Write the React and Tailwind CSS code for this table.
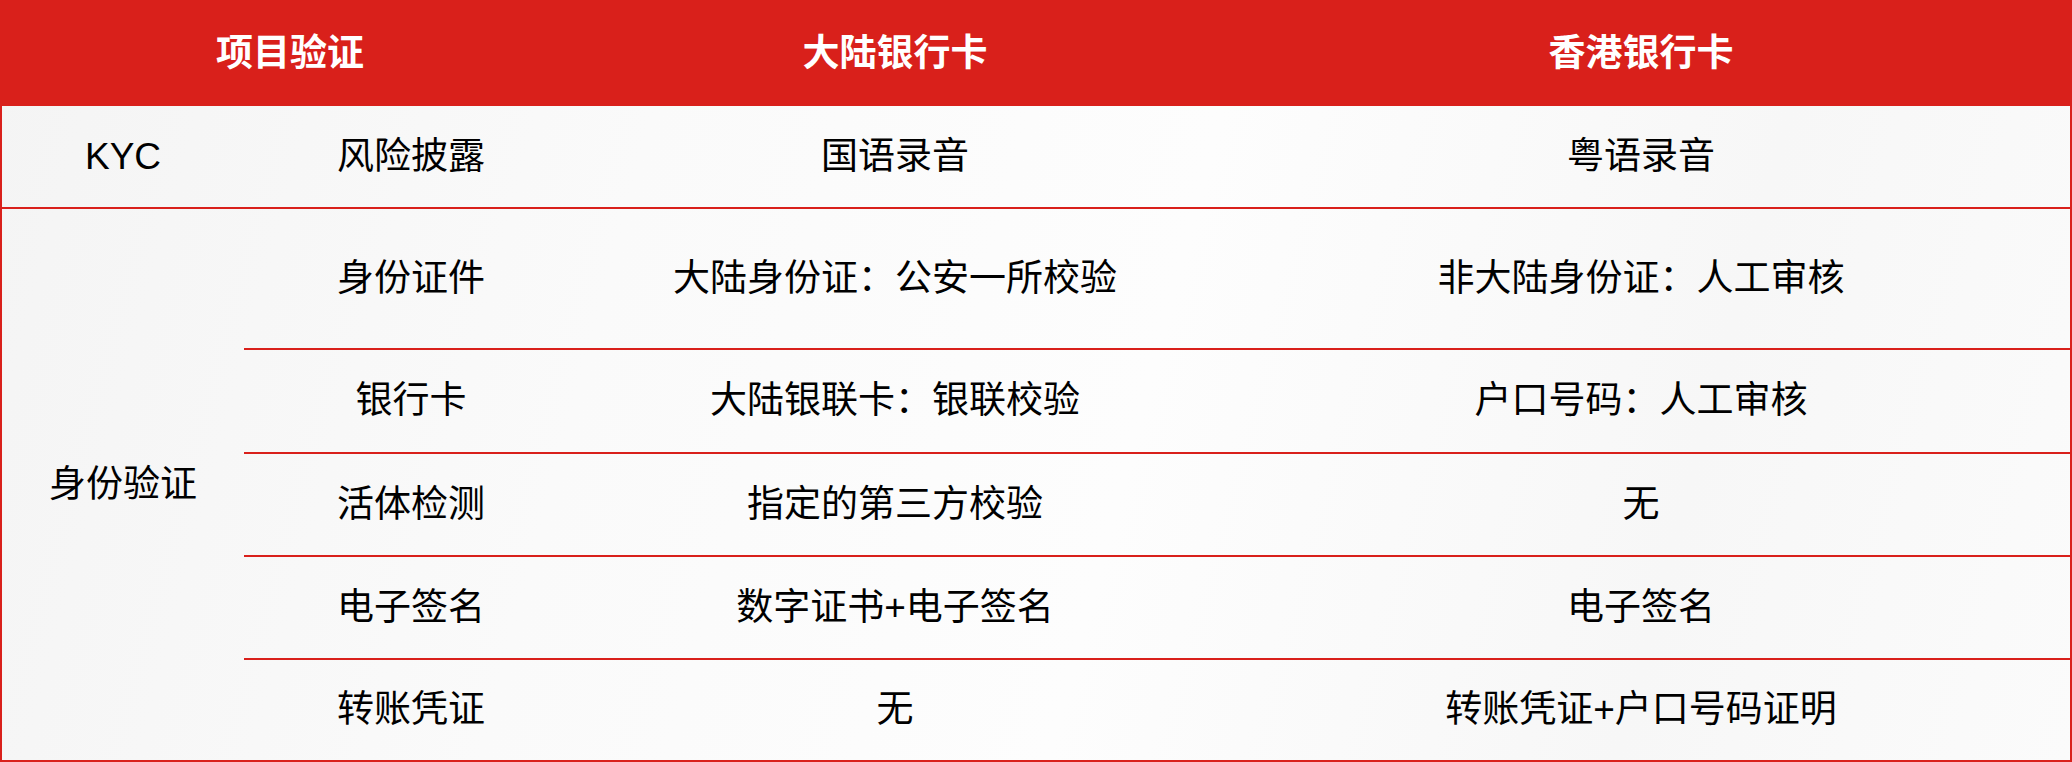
import React from "react";

const font = { fontFamily: '"Liberation Sans", "Noto Sans CJK SC", sans-serif' };

function Cell({ className = "", children }) {
  return (
    <div className={`flex items-center justify-center ${className}`}>{children}</div>
  );
}

const subRows = [
  { h: "h-[139px]", a: "身份证件", b: "大陆身份证：公安一所校验", c: "非大陆身份证：人工审核", border: false },
  { h: "h-[104px]", a: "银行卡", b: "大陆银联卡：银联校验", c: "户口号码：人工审核", border: true },
  { h: "h-[103px]", a: "活体检测", b: "指定的第三方校验", c: "无", border: true },
  { h: "h-[103px]", a: "电子签名", b: "数字证书+电子签名", c: "电子签名", border: true },
  { h: "h-[102px]", a: "转账凭证", b: "无", c: "转账凭证+户口号码证明", border: true },
];

export default function App() {
  return (
    <div
      style={font}
      className="w-[2072px] h-[762px] border-2 border-[#d9201b] bg-[linear-gradient(105deg,#f4f4f4_0%,#fafafa_30%,#fdfdfd_55%,#f7f7f7_80%,#fbfbfb_100%)] text-[37px] text-black flex flex-col overflow-hidden"
    >
      {/* Header */}
      <div className="h-[104px] bg-[#d9201b] flex text-white font-bold">
        <Cell className="w-[576px]">项目验证</Cell>
        <Cell className="w-[634px]">大陆银行卡</Cell>
        <Cell className="flex-1">香港银行卡</Cell>
      </div>

      {/* KYC row */}
      <div className="h-[101px] flex">
        <Cell className="w-[242px]">KYC</Cell>
        <Cell className="w-[334px]">风险披露</Cell>
        <Cell className="w-[634px]">国语录音</Cell>
        <Cell className="flex-1">粤语录音</Cell>
      </div>

      {/* Identity section */}
      <div className="flex-1 flex border-t-2 border-[#d9201b]">
        <Cell className="w-[242px]">身份验证</Cell>
        <div className="flex-1 flex flex-col">
          {subRows.map((r, i) => (
            <div
              key={i}
              className={`${r.h} flex ${r.border ? "border-t-2 border-[#d9201b]" : ""}`}
            >
              <Cell className="w-[334px]">{r.a}</Cell>
              <Cell className="w-[634px]">{r.b}</Cell>
              <Cell className="flex-1">{r.c}</Cell>
            </div>
          ))}
        </div>
      </div>
    </div>
  );
}
